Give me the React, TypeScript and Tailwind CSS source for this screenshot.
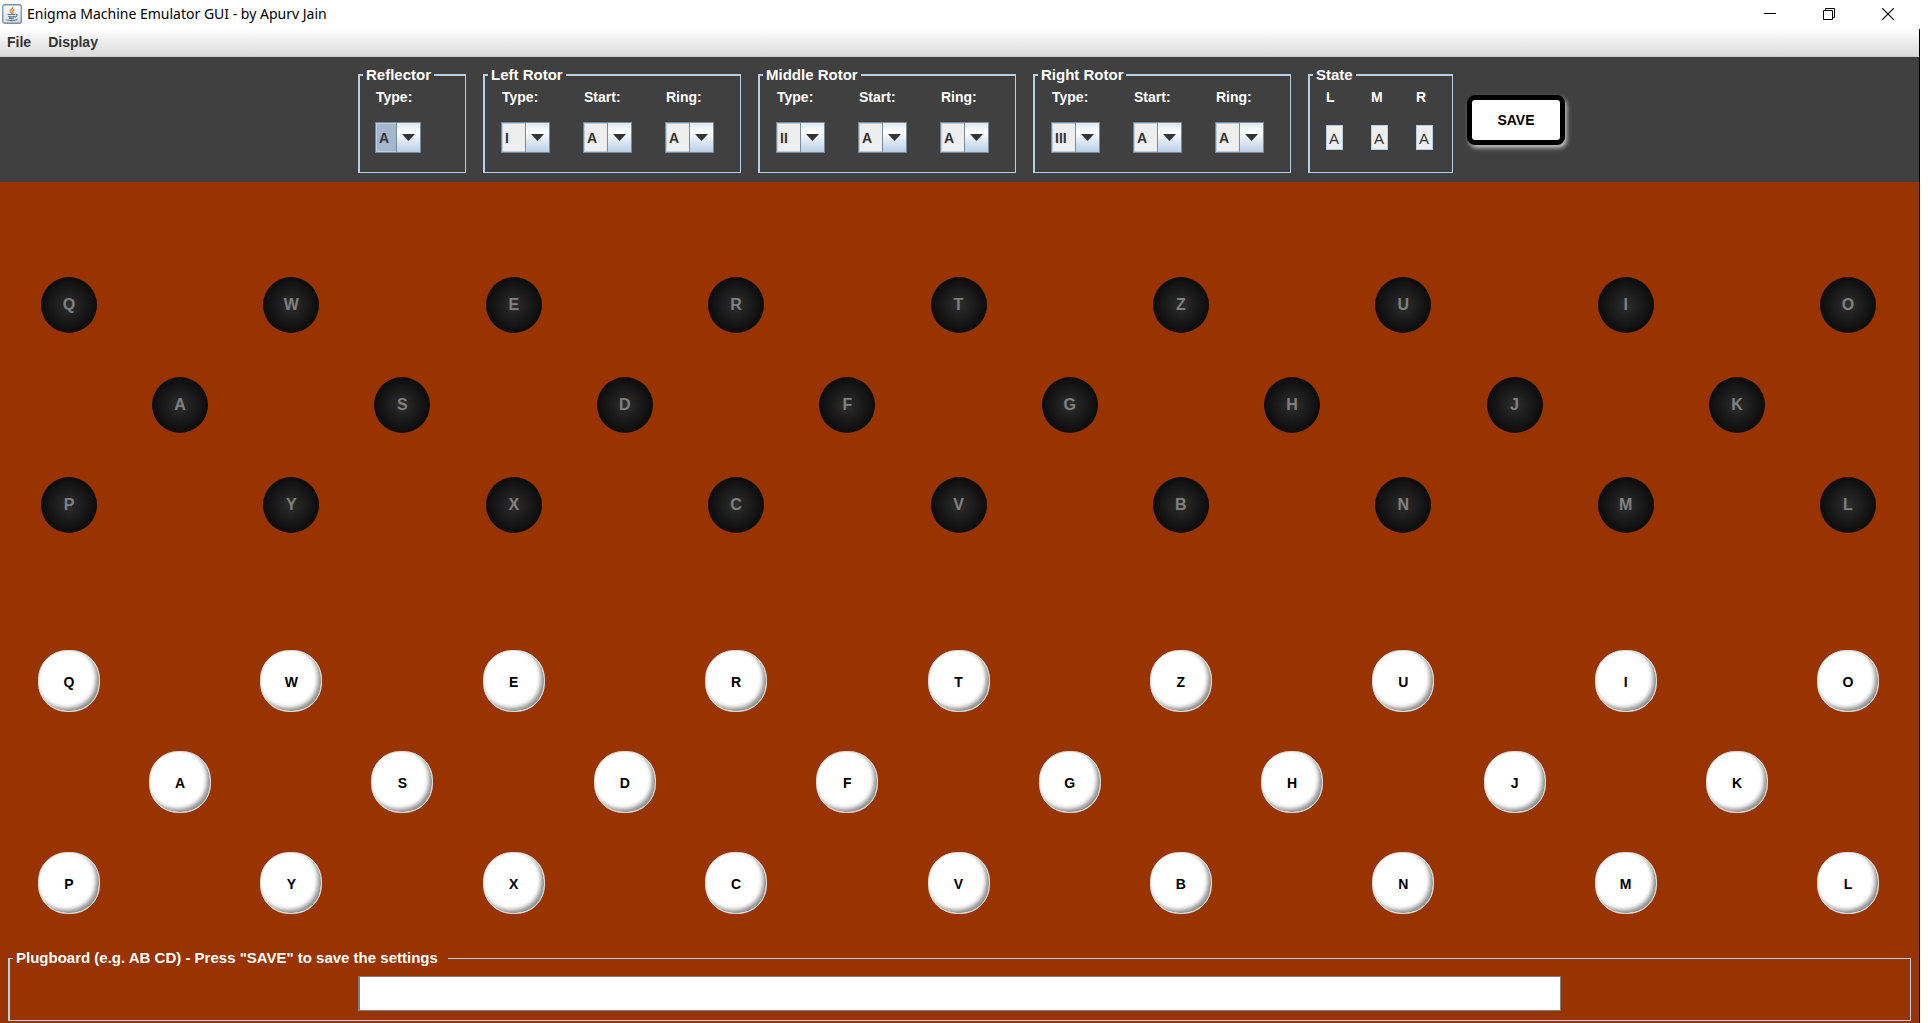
import React from "react";

const LETTERS = "ABCDEFGHIJKLMNOPQRSTUVWXYZ".split("");
const ROTORS = ["I", "II", "III", "IV", "V"];
const REFLECTORS = ["A", "B", "C"];
const ROWS = ["QWERTZUIO", "ASDFGHJK", "PYXCVBNML"];

const group =
  "h-[106px] min-w-0 border-t-2 border-l-2 border-r border-b border-[#b8cfe5] pl-[3px]";
const legend = "px-[3px] text-[15px] leading-4 font-bold";

function Combo({
  label,
  options,
  value,
  focused = false,
}: {
  label: string;
  options: string[];
  value: string;
  focused?: boolean;
}) {
  return (
    <label className="flex flex-col gap-[17px] text-sm leading-4 font-bold">
      <span className="pl-px">{label}</span>
      <span
        className={
          "relative flex h-[31px] border border-[#7a8a99] bg-[#eeeeee] " +
          (focused ? "w-[46px]" : "w-[49px]")
        }
      >
        <select
          defaultValue={value}
          className={
            "w-full appearance-none border border-[#b8cfe5] pt-px pl-0.5 text-sm font-bold text-[#333333] outline-none " +
            (focused ? "bg-[#a3b8cc]" : "bg-[#eeeeee]")
          }
        >
          {options.map((o) => (
            <option key={o}>{o}</option>
          ))}
        </select>
        <span className="pointer-events-none absolute inset-y-0 right-0 flex w-6 items-center justify-center border-l border-[#7a8a99] bg-linear-to-b from-[#dde8f3] via-white via-30% to-[#b8cfe5]">
          <svg width="13" height="7" viewBox="0 0 13 7" aria-hidden="true">
            <path d="M0 0h13L6.5 7z" fill="#333333" />
          </svg>
        </span>
      </span>
    </label>
  );
}

function Rotor({ name, type }: { name: string; type: string }) {
  return (
    <fieldset className={group + " w-[258px]"}>
      <legend className={legend}>{name}</legend>
      <div className="flex gap-[33px] pt-1.5 pl-[13px]">
        <Combo label="Type:" options={ROTORS} value={type} />
        <Combo label="Start:" options={LETTERS} value="A" />
        <Combo label="Ring:" options={LETTERS} value="A" />
      </div>
    </fieldset>
  );
}

function JavaIcon() {
  return (
    <svg width="20" height="20" viewBox="0 0 20 20" aria-hidden="true">
      <defs>
        <linearGradient id="tile" x1="0" y1="0" x2="0" y2="1">
          <stop offset="0" stopColor="#ffffff" />
          <stop offset="1" stopColor="#d5dade" />
        </linearGradient>
      </defs>
      <rect x=".75" y=".75" width="18.5" height="18.5" rx="2" fill="url(#tile)" stroke="#7690a5" strokeWidth="1.3" />
      <path d="M10.8 2.8c.8 2-3 2.800-2.600 4.600.2.900 1.300 1.300 1.500 2.200M12.400 5.600c-2 .8-2.400 1.600-1.600 2.600.4.600.2 1-.3 1.500" fill="none" stroke="#e8833a" strokeWidth="1.300" />
      <path d="M5.600 10.500h7.600M6.300 12.400c2 .6 4.600.6 6.400 0M7 14.200c1.700.5 3.600.5 5 0M4.500 15.800c3 1.100 8.500 1 11-.3M13.500 10.400c2.200-.3 2.200 2-.6 2.700" fill="none" stroke="#5b7f9c" strokeWidth="1.200" />
    </svg>
  );
}

export default function App() {
  return (
    <div className="flex min-h-screen flex-col overflow-hidden bg-white font-['Liberation_Sans',sans-serif] text-white">
      <header className="flex h-[29px] items-center justify-between pr-[34px] pb-0.5 pl-0.5 text-black">
        <div className="flex items-center gap-[5px]">
          <JavaIcon />
          <h1 className="font-['Noto_Sans',sans-serif] text-sm leading-5">
            Enigma Machine Emulator GUI - by Apurv Jain
          </h1>
        </div>
        <div className="flex gap-[47px]">
          <button aria-label="Minimize">
            <svg width="12" height="12" viewBox="0 0 12 12" stroke="#000" fill="none">
              <path d="M0 5.500h12" />
            </svg>
          </button>
          <button aria-label="Restore">
            <svg width="12" height="12" viewBox="0 0 12 12" stroke="#000" fill="none">
              <path d="M.5 2.500h9v9h-9zM2.500 2.500v-2h9v9h-2" />
            </svg>
          </button>
          <button aria-label="Close">
            <svg width="12" height="12" viewBox="0 0 12 12" stroke="#000" fill="none">
              <path d="M.2 .2l11.600 11.600M11.800 .2L.2 11.800" strokeWidth="1.200" />
            </svg>
          </button>
        </div>
      </header>

      <div className="mr-2 flex flex-1 flex-col border-r border-black bg-[#993300]">
        <nav className="flex h-7 gap-[17px] border-b border-[#cccccc] bg-linear-to-b from-white to-[#dadada] pb-0.5 pl-[7px] text-sm leading-6 font-bold text-[#333333]">
          <button>File</button>
          <button>Display</button>
        </nav>

        <section className="flex h-[125px] justify-center gap-[17px] bg-[#404040] pt-[10px] pl-1">
          <fieldset className={group + " w-[108px]"}>
            <legend className={legend}>Reflector</legend>
            <div className="flex pt-1.5 pl-3">
              <Combo label="Type:" options={REFLECTORS} value="A" focused />
            </div>
          </fieldset>
          <Rotor name="Left Rotor" type="I" />
          <Rotor name="Middle Rotor" type="II" />
          <Rotor name="Right Rotor" type="III" />
          <fieldset className={group + " w-[145px]"}>
            <legend className={legend}>State</legend>
            <div className="flex gap-7 pt-1.5 pl-[13px]">
              {["L", "M", "R"].map((name) => (
                <label key={name} className="flex w-[17px] flex-col gap-5 text-sm leading-4 font-bold">
                  <span>{name}</span>
                  <input
                    readOnly
                    defaultValue="A"
                    className="h-[25px] w-full border border-[#b8cfe5] bg-[#eeeeee] pt-0.5 pl-0.5 text-[15px] font-normal text-[#333333] outline-none"
                  />
                </label>
              ))}
            </div>
          </fieldset>
          <button className="mt-7 -ml-[3px] h-[50px] w-[98px] rounded-lg border-[5px] border-black bg-white text-sm font-bold text-black shadow-[2px_3px_4px_#c0c0c0]">
            SAVE
          </button>
        </section>

        <main className="flex flex-1 flex-col">
          <section aria-label="Lampboard" className="flex flex-col gap-11 pt-[95px]">
            {ROWS.map((row, i) => (
              <div key={row} className={"flex justify-between " + (i === 1 ? "pr-[154px] pl-[152px]" : "pr-[43px] pl-[41px]")}>
                {row.split("").map((c) => (
                  <span
                    key={c}
                    className="flex size-14 items-center justify-center rounded-full bg-radial from-[#2e2e2e] to-[#0c0c0c] to-70% text-base font-bold text-[#808080]"
                  >
                    {c}
                  </span>
                ))}
              </div>
            ))}
          </section>

          <section aria-label="Keyboard" className="flex flex-col gap-[39px] pt-[117px]">
            {ROWS.map((row, i) => (
              <div key={row} className={"flex justify-between " + (i === 1 ? "pr-[151px] pl-[149px]" : "pr-10 pl-[38px]")}>
                {row.split("").map((c) => (
                  <button
                    key={c}
                    className="size-[62px] rounded-[29px] border border-[#d8d8d8] bg-white pt-0.5 text-sm font-bold text-black shadow-[inset_-3px_-3px_4px_#8c8c8c]"
                  >
                    {c}
                  </button>
                ))}
              </div>
            ))}
          </section>

          <fieldset className="mx-2 mt-9 mb-[3px] min-w-0 border border-l-2 border-[#b8cfe5] pl-[3px]">
            <legend className="pr-[10px] pl-[3px] text-[15px] leading-4 font-bold">
              <label htmlFor="plugboard">
                Plugboard (e.g. AB CD) - Press "SAVE" to save the settings
              </label>
            </legend>
            <div className="flex justify-center pt-[10px] pr-1 pb-[9px]">
              <input
                id="plugboard"
                type="text"
                className="h-[35px] w-full max-w-[1203px] border border-l-2 border-[#7f7f7f] bg-white px-2 text-sm text-black outline-none"
              />
            </div>
          </fieldset>
        </main>
      </div>
    </div>
  );
}
